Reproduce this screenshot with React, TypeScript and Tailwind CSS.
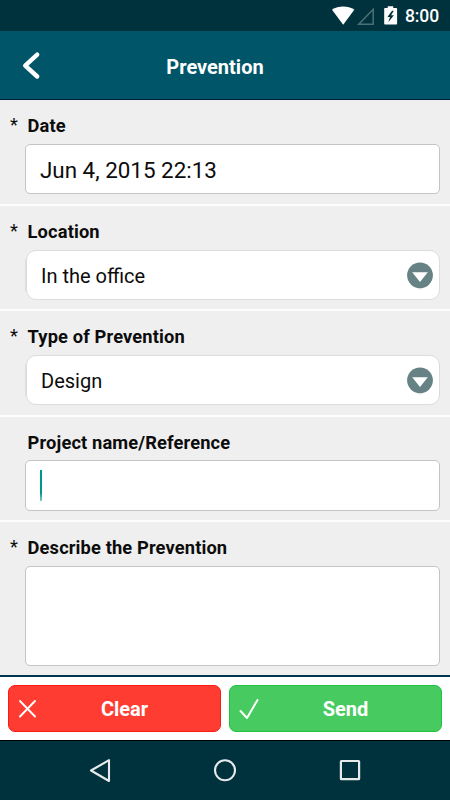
import type { ReactNode } from "react";
import clsx from "clsx";

type FieldProps = {
  label: string;
  required?: boolean;
  className: string;
  children: ReactNode;
};

function Field({ label, required, className, children }: FieldProps) {
  return (
    <div className={clsx("flex flex-col pl-[25px] pr-[10px]", className)}>
      <div className="-ml-[15px] flex h-[22px] shrink-0 items-start text-[18.3px] leading-[22px]">
        <span className="w-[17.6px]">{required ? "*" : ""}</span>
        <span className="pt-[1px] font-bold tracking-[0.13px]">{label}</span>
      </div>
      {children}
    </div>
  );
}

function SelectBox({ value }: { value: string }) {
  return (
    <div className="mt-[8px] flex h-[50px] items-center">
      <div className="h-[32px] w-px shrink-0 bg-[#dedede]" />
      <div className="flex h-[50px] grow items-center justify-between rounded-[10px] border border-[#dcdcdc] bg-white pr-[5px] pl-[14px]">
        <span className="pt-[1px] text-[20px] leading-[24px]">{value}</span>
        <svg width="28" height="30" viewBox="0 0 28 30" aria-hidden="true">
          <ellipse cx="14" cy="18" rx="7" ry="11.7" fill="#f0f0f0" />
          <circle cx="14" cy="15.3" r="12.9" fill="#668284" />
          <path d="M6.2 12.300h15.600L14 22z" fill="#fff" />
        </svg>
      </div>
    </div>
  );
}

function StatusBar() {
  return (
    <div className="flex h-[31px] shrink-0 items-center bg-[#00323d] pl-[332px] text-white">
      <svg width="70" height="31" viewBox="0 0 70 31" aria-hidden="true">
        <path d="M0 9.800C6.500 5.500 15.800 5.500 22.300 9.800L11.200 24.700z" fill="#fff" />
        <path d="M41.200 9.300V24.200H26.800z" fill="none" stroke="#4d6f77" strokeWidth="1.500" />
        <path
          d="M55.700 6.200h5.500v1.800h3.100q.8 0 .8.8v15q0 .8-.8.8H53q-.8 0-.8-.8V8.800q0-.8.8-.8h2.700z"
          fill="#fff"
        />
        <path d="M60 10.800l-4.600 6.200h2.600l-1.700 5.200 5.600-6.900h-2.800l2.700-4.500z" fill="#00323d" />
      </svg>
      <span className="ml-[3px] pt-[1px] text-[17.5px] font-medium leading-[20px] tracking-[-0.1px]">
        8:00
      </span>
    </div>
  );
}

export default function App() {
  return (
    <div className="flex h-[800px] w-[450px] flex-col overflow-hidden bg-[#efefef] font-['Roboto',sans-serif] text-[#0c0c0c]">
      <StatusBar />

      {/* Header */}
      <header className="grid h-[69px] shrink-0 grid-cols-[80px_1fr_100px] items-center border-b border-[#001f3a] bg-[#005568] text-white">
        <svg className="ml-[20px]" width="24" height="30" viewBox="0 0 24 30" aria-hidden="true">
          <path
            d="M17.200 4.700L5.200 15.600l12 10.900"
            fill="none"
            stroke="#fff"
            strokeWidth="4.400"
            strokeLinecap="round"
            strokeLinejoin="round"
          />
        </svg>
        <h1 className="pt-[3px] text-center text-[20px] font-bold leading-[24px]">
          Prevention
        </h1>
      </header>

      {/* Form */}
      <main className="flex h-[575px] shrink-0 flex-col">
        <Field label="Date" required className="h-[106px] border-b-2 border-[#fcfcfc] pt-[14px]">
          <div className="mt-[8px] flex h-[50px] items-center rounded-[5px] border border-[#c4c4c4] bg-white px-[14px] pt-[2px] text-[22.4px] leading-[28px]">
            Jun 4, 2015 22:13
          </div>
        </Field>
        <Field label="Location" required className="h-[105px] border-b-2 border-[#fcfcfc] pt-[14px]">
          <SelectBox value="In the office" />
        </Field>
        <Field label="Type of Prevention" required className="h-[106px] border-b-2 border-[#fcfcfc] pt-[14px]">
          <SelectBox value="Design" />
        </Field>
        <Field label="Project name/Reference" className="h-[105px] border-b-2 border-[#fcfcfc] pt-[14px]">
          <div className="mt-[7px] flex h-[51px] items-center rounded-[5px] border border-[#c4c4c4] bg-white px-[14px]">
            <div className="h-[31px] w-[2px] bg-linear-to-b from-[#009688] from-75% to-[#80cbc4]" />
          </div>
        </Field>
        <Field label="Describe the Prevention" required className="h-[153px] pt-[14px]">
          <div className="mt-[8px] h-[100px] rounded-[5px] border border-[#c4c4c4] bg-white" />
        </Field>
      </main>

      {/* Actions */}
      <div className="flex h-[65px] shrink-0 gap-[8px] border-t-2 border-[#003550] bg-white px-[8px] pt-[8px] text-[20px] font-bold text-white">
        <button className="grid h-[47px] w-[213px] grid-cols-[40px_1fr_20px] items-center rounded-[7px] border border-[#ff1a12] bg-[#ff3c32]">
          <svg className="ml-[8px]" width="20" height="20" viewBox="0 0 20 20" aria-hidden="true">
            <path
              d="M3 2l15 15.500M18 2L3 17.500"
              fill="none"
              stroke="#fff"
              strokeWidth="1.900"
              strokeLinecap="round"
            />
          </svg>
          <span className="pt-[1px]">Clear</span>
        </button>
        <button className="grid h-[47px] w-[213px] grid-cols-[40px_1fr_20px] items-center rounded-[7px] border border-[#1fc540] bg-[#47ca5f]">
          <svg className="ml-[9px]" width="22" height="22" viewBox="0 0 22 22" aria-hidden="true">
            <path
              d="M1.500 13l6.500 7L18.500 2"
              fill="none"
              stroke="#fff"
              strokeWidth="2"
              strokeLinecap="round"
              strokeLinejoin="round"
            />
          </svg>
          <span className="pt-[1px]">Send</span>
        </button>
      </div>

      {/* Android navigation */}
      <nav className="flex h-[60px] shrink-0 items-center justify-between border-t border-black bg-[#00323d] px-[87px]">
        <svg width="26" height="26" viewBox="0 0 26 26" aria-hidden="true">
          <path d="M22 2.200v20.800L4 12.500z" fill="none" stroke="#e6eaeb" strokeWidth="2.100" strokeLinejoin="round" />
        </svg>
        <svg width="26" height="26" viewBox="0 0 26 26" aria-hidden="true">
          <circle cx="13" cy="12.300" r="10" fill="none" stroke="#e6eaeb" strokeWidth="2.100" />
        </svg>
        <svg width="26" height="26" viewBox="0 0 26 26" aria-hidden="true">
          <rect x="3.900" y="3" width="18.200" height="18.200" rx=".5" fill="none" stroke="#e6eaeb" strokeWidth="2.200" />
        </svg>
      </nav>
    </div>
  );
}
